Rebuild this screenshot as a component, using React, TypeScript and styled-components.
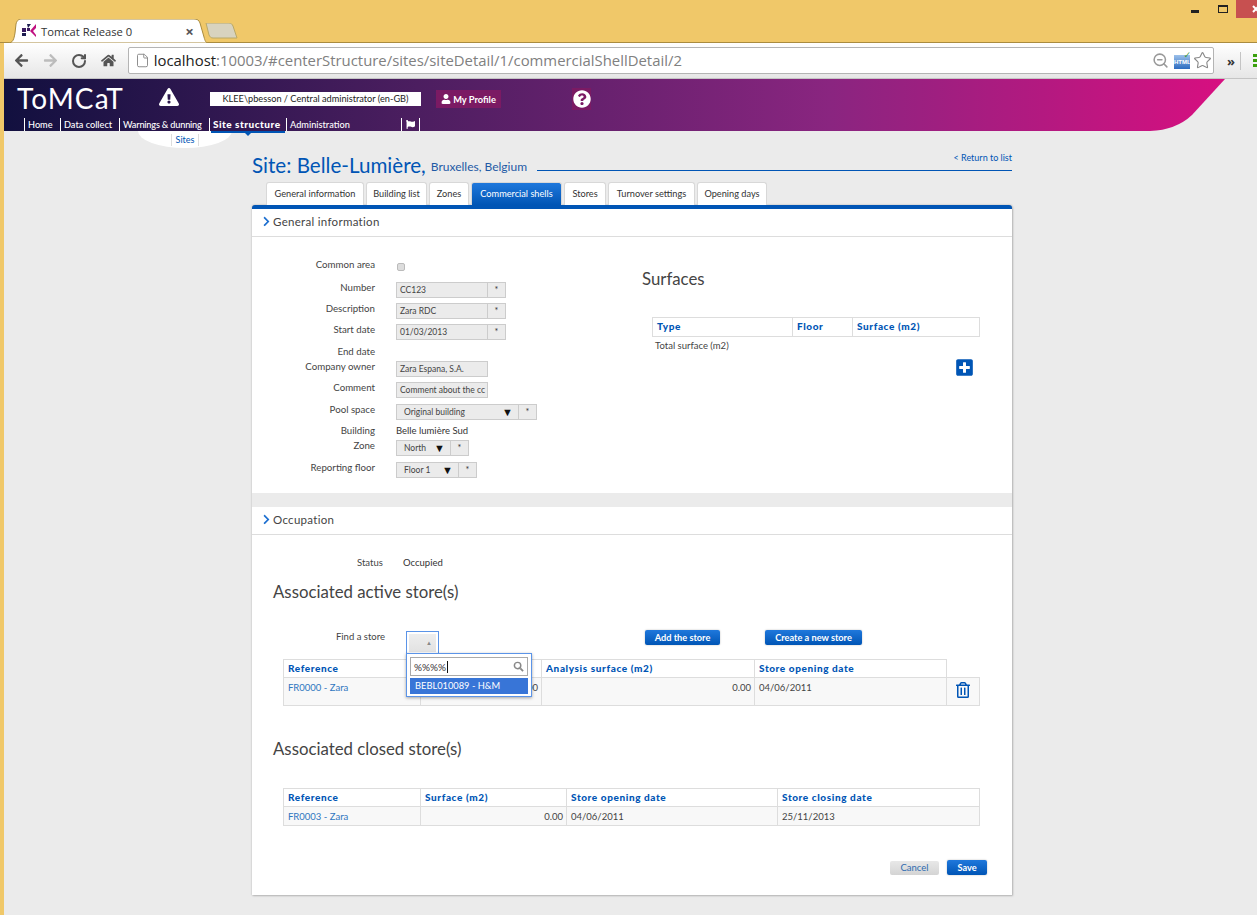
import React from 'react';
import styled, { createGlobalStyle } from 'styled-components';
import { File, RotateCw, Star, ZoomOut } from 'lucide-react';
import {
  FaArrowLeft,
  FaArrowRight,
  FaChevronRight,
  FaExclamationTriangle,
  FaFlag,
  FaHome,
  FaPlusSquare,
  FaQuestionCircle,
  FaRegTrashAlt,
  FaUser,
} from 'react-icons/fa';

const GlobalStyle = createGlobalStyle`
  html, body {
    margin: 0;
    padding: 0;
    height: 915px;
    overflow: hidden;
    background: #f0c869;
  }
  * {
    box-sizing: border-box;
  }
`;

const BLUE = '#0055b5';

const navItems = [
  { label: 'Home', width: 36 },
  { label: 'Data collect', width: 59 },
  { label: 'Warnings & dunning', width: 90, tight: true },
  { label: 'Site structure', width: 77 },
  { label: 'Administration', width: 115 },
];

const pageTabs = [
  { label: 'General information', width: 98 },
  { label: 'Building list', width: 61 },
  { label: 'Zones', width: 40 },
  { label: 'Commercial shells', width: 91 },
  { label: 'Stores', width: 42 },
  { label: 'Turnover settings', width: 87 },
  { label: 'Opening days', width: 70 },
];

const App: React.FC = () => (
  <Page>
    <GlobalStyle />
    <TitleBar>
      <BrowserTab>
        <TabShape width="200" height="24" viewBox="0 0 200 24">
          <path d="M0 24 C5 24 6 20 7 14 L8 5 C9 1 11 0 14 0 L186 0 C189 0 191 1 192 4 L196 18 C197 22 198 24 200 24 Z" fill="#fff" stroke="#a98b3f" />
        </TabShape>
        <TabIcon width="14" height="14" viewBox="0 0 14 14">
          <rect x="0" y="4" width="4" height="4" fill="#3a1a60" />
          <rect x="0" y="9" width="4" height="3" fill="#1c1c50" />
          <rect x="5" y="4" width="3" height="3" fill="#3a1a60" />
          <path d="M5 0 L9 0 L6 4 Z" fill="#1c1c50" />
          <path d="M8 7 L14 0 L14 4 L11 7 L14 11 L14 13 Z" fill="#c01080" />
        </TabIcon>
        <TabTitle>Tomcat Release 0</TabTitle>
        <TabClose>×</TabClose>
      </BrowserTab>
      <NewTab width="34" height="16" viewBox="0 0 34 16">
        <path d="M1 0 L24 0 C26 0 27 1 28 3 L32 15 L8 15 C6 15 5 14 4 12 Z" fill="#d8d3bf" stroke="#b8a868" />
      </NewTab>
      <WindowControls>
        <Minimize />
        <Maximize />
        <CloseBox>
          <svg width="21" height="18" viewBox="0 0 21 18">
            <path d="M17 6 L23 12 M23 6 L17 12" stroke="#fff" strokeWidth="2" />
          </svg>
        </CloseBox>
      </WindowControls>
    </TitleBar>

    <Frame>
      <Toolbar>
        <ToolIcon $color="#555"><FaArrowLeft size={15} /></ToolIcon>
        <ToolIcon $color="#bcbcbc"><FaArrowRight size={15} /></ToolIcon>
        <ToolIcon $color="#555"><RotateCw size={16} strokeWidth={3} /></ToolIcon>
        <ToolIcon $color="#555"><FaHome size={15} /></ToolIcon>
        <AddressBar>
          <File size={15} color="#888" strokeWidth={1.5} />
          <Url>
            <strong>localhost</strong>:10003/#centerStructure/sites/siteDetail/1/commercialShellDetail/2
          </Url>
          <ZoomOut size={17} color="#999" strokeWidth={2.2} />
          <HtmlBadge>HTML</HtmlBadge>
          <Star size={19} color="#888" strokeWidth={1.4} />
        </AddressBar>
        <Chevrons>»</Chevrons>
        <ToolDivider />
        <Hamburger />
      </Toolbar>

      <AppHeader>
        <HeaderTop>
          <Logo>ToMCaT</Logo>
          <WarnIcon><FaExclamationTriangle size={20} /></WarnIcon>
          <UserBox>KLEE\pbesson / Central administrator (en-GB)</UserBox>
          <ProfileButton><FaUser size={10} />My Profile</ProfileButton>
          <HelpButton><FaQuestionCircle size={18} /></HelpButton>
        </HeaderTop>
        <Nav>
          {navItems.map((item) => (
            <NavItem
              key={item.label}
              $width={item.width}
              $tight={item.tight}
              $active={item.label === 'Site structure'}
            >
              {item.label}
            </NavItem>
          ))}
          <FlagItem><FaFlag size={9} /></FlagItem>
        </Nav>
      </AppHeader>
      <SubNavBubble>
        <SubNavItem>Sites</SubNavItem>
      </SubNavBubble>
      <ActiveUnderline />

      <Main>
        <TitleRow>
          <SiteTitle>Site: Belle-Lumière,</SiteTitle>
          <SiteLocation>Bruxelles, Belgium</SiteLocation>
          <TitleRule>
            <ReturnLink>&lt; Return to list</ReturnLink>
          </TitleRule>
        </TitleRow>

        <Tabs>
          {pageTabs.map((tab) => (
            <PageTab key={tab.label} $width={tab.width} $active={tab.label === 'Commercial shells'}>
              {tab.label}
            </PageTab>
          ))}
        </Tabs>

        <Panel>
          <SectionHeader>
            <FaChevronRight size={11} color="#1d6fd0" />
            General information
          </SectionHeader>
          <GeneralBody>
            <FormColumn>
              <FormRow $height={23}>
                <Label>Common area</Label>
                <Check type="checkbox" disabled />
              </FormRow>
              <FormRow $height={21}>
                <Label>Number</Label>
                <FieldGroup><Field $width={92}>CC123</Field><Star2>*</Star2></FieldGroup>
              </FormRow>
              <FormRow $height={21}>
                <Label>Description</Label>
                <FieldGroup><Field $width={92}>Zara RDC</Field><Star2>*</Star2></FieldGroup>
              </FormRow>
              <FormRow $height={22}>
                <Label>Start date</Label>
                <FieldGroup><Field $width={92}>01/03/2013</Field><Star2>*</Star2></FieldGroup>
              </FormRow>
              <FormRow $height={15}>
                <Label>End date</Label>
              </FormRow>
              <FormRow $height={21}>
                <Label>Company owner</Label>
                <Field $width={92}>Zara Espana, S.A.</Field>
              </FormRow>
              <FormRow $height={22}>
                <Label>Comment</Label>
                <Field $width={92}>Comment about the cc</Field>
              </FormRow>
              <FormRow $height={21}>
                <Label>Pool space</Label>
                <FieldGroup>
                  <SelectField $width={123}>Original building<Caret>▼</Caret></SelectField>
                  <Star2>*</Star2>
                </FieldGroup>
              </FormRow>
              <FormRow $height={15}>
                <Label>Building</Label>
                <PlainValue>Belle lumière Sud</PlainValue>
              </FormRow>
              <FormRow $height={22}>
                <Label>Zone</Label>
                <FieldGroup>
                  <SelectField $width={55}>North<Caret>▼</Caret></SelectField>
                  <Star2>*</Star2>
                </FieldGroup>
              </FormRow>
              <FormRow $height={21}>
                <Label>Reporting floor</Label>
                <FieldGroup>
                  <SelectField $width={63}>Floor 1<Caret>▼</Caret></SelectField>
                  <Star2>*</Star2>
                </FieldGroup>
              </FormRow>
            </FormColumn>
            <SurfaceColumn>
              <Heading>Surfaces</Heading>
              <SurfaceTable>
                <colgroup>
                  <col width="140" />
                  <col width="60" />
                  <col width="127" />
                </colgroup>
                <thead>
                  <tr>
                    <Th>Type</Th>
                    <Th>Floor</Th>
                    <Th>Surface (m2)</Th>
                  </tr>
                </thead>
              </SurfaceTable>
              <TotalLine>Total surface (m2)</TotalLine>
              <AddIcon><FaPlusSquare size={19} /></AddIcon>
            </SurfaceColumn>
          </GeneralBody>

          <SectionGap />

          <SectionHeader>
            <FaChevronRight size={11} color="#1d6fd0" />
            Occupation
          </SectionHeader>
          <OccupationBody>
            <StatusRow>
              <StatusLabel>Status</StatusLabel>
              <PlainValue>Occupied</PlainValue>
            </StatusRow>
            <StoreHeading>Associated active store(s)</StoreHeading>
            <FindRow>
              <FindLabel>Find a store</FindLabel>
              <Combo>
                <ComboInner>▲</ComboInner>
              </Combo>
              <Dropdown>
                <SearchBox>
                  <SearchText>%%%%</SearchText>
                  <SearchGlass width="11" height="11" viewBox="0 0 12 12">
                    <circle cx="5" cy="5" r="3.5" fill="none" stroke="#888" strokeWidth="1.6" />
                    <path d="M8 8 L11 11" stroke="#888" strokeWidth="2" />
                  </SearchGlass>
                </SearchBox>
                <Option>BEBL010089 - H&amp;M</Option>
              </Dropdown>
              <AddStoreButton>Add the store</AddStoreButton>
              <CreateStoreButton>Create a new store</CreateStoreButton>
            </FindRow>
            <StoreTable>
              <colgroup>
                <col width="137" />
                <col width="121" />
                <col width="213" />
                <col width="192" />
                <col width="33" />
              </colgroup>
              <thead>
                <tr>
                  <Th>Reference</Th>
                  <Th>Surface (m2)</Th>
                  <Th>Analysis surface (m2)</Th>
                  <Th>Store opening date</Th>
                  <BlankTh />
                </tr>
              </thead>
              <tbody>
                <tr>
                  <Td><StoreLink>FR0000 - Zara</StoreLink></Td>
                  <NumTd>0.00</NumTd>
                  <NumTd>0.00</NumTd>
                  <Td>04/06/2011</Td>
                  <IconTd><FaRegTrashAlt size={16} color={BLUE} /></IconTd>
                </tr>
              </tbody>
            </StoreTable>
            <ClosedHeading>Associated closed store(s)</ClosedHeading>
            <ClosedTable>
              <colgroup>
                <col width="137" />
                <col width="146" />
                <col width="211" />
                <col width="202" />
              </colgroup>
              <thead>
                <tr>
                  <Th>Reference</Th>
                  <Th>Surface (m2)</Th>
                  <Th>Store opening date</Th>
                  <Th>Store closing date</Th>
                </tr>
              </thead>
              <tbody>
                <tr>
                  <ClosedTd><StoreLink>FR0003 - Zara</StoreLink></ClosedTd>
                  <ClosedNum>0.00</ClosedNum>
                  <ClosedTd>04/06/2011</ClosedTd>
                  <ClosedTd>25/11/2013</ClosedTd>
                </tr>
              </tbody>
            </ClosedTable>
            <Footer>
              <CancelButton>Cancel</CancelButton>
              <SaveButton>Save</SaveButton>
            </Footer>
          </OccupationBody>
        </Panel>
      </Main>
    </Frame>
  </Page>
);

const Page = styled.div`
  width: 1257px;
  height: 915px;
  overflow: hidden;
  background: #f0c869;
  font-family: 'Lato', 'Open Sans', sans-serif;
`;

const TitleBar = styled.div`
  position: relative;
  height: 43px;
  display: flex;
  align-items: flex-end;
  padding-left: 8px;
  border-bottom: 1px solid #a98b3f;
`;

const BrowserTab = styled.div`
  position: relative;
  width: 200px;
  height: 24px;
  margin-bottom: -1px;
  display: flex;
  align-items: center;
  padding-left: 14px;
`;

const TabShape = styled.svg`
  position: absolute;
  left: 0;
  top: 0;
`;

const TabIcon = styled.svg`
  position: relative;
  flex: none;
`;

const TabTitle = styled.span`
  position: relative;
  margin-left: 5px;
  font: 11.2px 'Open Sans', sans-serif;
  color: #333;
`;

const TabClose = styled.span`
  position: relative;
  margin-left: 53px;
  font: bold 15px 'Open Sans', sans-serif;
  color: #555;
`;

const NewTab = styled.svg`
  margin: 0 0 3px -3px;
`;

const WindowControls = styled.div`
  position: absolute;
  top: 0;
  right: 0;
  display: flex;
  align-items: flex-start;
`;

const Minimize = styled.span`
  width: 8px;
  height: 3px;
  margin: 10px 19px 0 0;
  background: #222;
`;

const Maximize = styled.span`
  width: 10px;
  height: 8px;
  margin: 5px 8px 0 0;
  border: 1px solid #222;
  border-top-width: 2px;
`;

const CloseBox = styled.span`
  width: 21px;
  height: 18px;
  background: #c75050;
`;

const Frame = styled.div`
  position: relative;
  margin-left: 4px;
  height: 872px;
  background: #ebebeb;
`;

const Toolbar = styled.div`
  height: 36px;
  display: flex;
  align-items: center;
  padding-left: 3px;
  background: linear-gradient(#fff, #e6e6e6);
  border-bottom: 1px solid #c4c4c4;
`;

const ToolIcon = styled.span<{ $color: string }>`
  width: 29px;
  display: flex;
  justify-content: center;
  color: ${(props) => props.$color};
`;

const AddressBar = styled.div`
  width: 1089px;
  height: 27px;
  margin-left: 5px;
  display: flex;
  align-items: center;
  padding: 0 1px 0 6px;
  background: #fff;
  border: 1px solid #b4b4b4;
  border-radius: 2px;
  svg {
    flex: none;
  }
`;

const Url = styled.span`
  flex: 1;
  margin: 0 0 1px 4px;
  font: 14.9px 'Open Sans', sans-serif;
  color: #808080;
  strong {
    font-weight: 400;
    color: #222;
  }
`;

const HtmlBadge = styled.span`
  position: relative;
  width: 16px;
  height: 14px;
  margin: 2px 3px 0 5px;
  background: linear-gradient(#9cc0ea, #2c6cc0);
  color: #fff;
  font: bold 6px/15px 'Liberation Sans', sans-serif;
  text-align: center;
  &::after {
    content: '✓';
    position: absolute;
    top: -5px;
    right: -1px;
    color: #3c9a3c;
    font: bold 9px/10px 'DejaVu Sans', sans-serif;
  }
`;

const Chevrons = styled.span`
  margin-left: 13px;
  font: bold 13px 'Open Sans', sans-serif;
  color: #333;
`;

const ToolDivider = styled.span`
  width: 1px;
  height: 18px;
  margin-left: 5px;
  background: #c4c4c4;
`;

const Hamburger = styled.span`
  width: 4px;
  height: 13px;
  margin-left: 12px;
  background: repeating-linear-gradient(#3aa00c 0 3px, transparent 3px 5px);
`;

const AppHeader = styled.header`
  height: 52px;
  display: flex;
  flex-direction: column;
  background: linear-gradient(90deg, #12103f 0%, #4c1e60 33%, #8a2580 66%, #d60f80 97%);
  clip-path: path('M0 0 H1221 L1188 36 Q1172 51 1146 52 H0 Z');
`;

const HeaderTop = styled.div`
  height: 39px;
  display: flex;
  align-items: flex-start;
  padding-left: 13px;
`;

const Logo = styled.div`
  width: 106px;
  margin-top: 3px;
  font: 400 28px/32px 'Lato', sans-serif;
  letter-spacing: 1.1px;
  color: #fff;
`;

const WarnIcon = styled.span`
  margin: 8px 0 0 36px;
  color: #fff;
`;

const UserBox = styled.div`
  width: 211px;
  height: 14px;
  margin: 13px 0 0 31px;
  background: #fff;
  color: #222;
  font-size: 9.2px;
  line-height: 14px;
  text-align: center;
`;

const ProfileButton = styled.div`
  width: 65px;
  height: 18px;
  margin: 11px 0 0 15px;
  display: flex;
  align-items: center;
  justify-content: center;
  gap: 2px;
  background: #7b1a63;
  color: #fff;
  font-size: 9.3px;
  font-weight: 700;
`;

const HelpButton = styled.div`
  width: 19px;
  height: 22px;
  margin: 9px 0 0 71px;
  display: flex;
  align-items: center;
  justify-content: center;
  background: #7b1a63;
  color: #fff;
`;

const Nav = styled.nav`
  height: 13px;
  display: flex;
  padding-left: 20px;
`;

const NavItem = styled.div<{ $width: number; $active?: boolean; $tight?: boolean }>`
  width: ${(props) => props.$width}px;
  height: 13px;
  padding-left: 3px;
  border-left: 1px solid #fff;
  color: #fff;
  font-size: ${(props) => (props.$active ? '10px' : '9.2px')};
  font-weight: ${(props) => (props.$active ? 900 : 500)};
  letter-spacing: ${(props) => (props.$active ? '0.5px' : props.$tight ? '-0.2px' : '0')};
  line-height: 13px;
  white-space: nowrap;
`;

const FlagItem = styled.div`
  width: 19px;
  height: 13px;
  display: flex;
  align-items: center;
  justify-content: center;
  border-left: 1px solid #fff;
  border-right: 1px solid #fff;
  color: #fff;
`;

const SubNavBubble = styled.div`
  position: absolute;
  left: 134px;
  top: 88px;
  width: 94px;
  height: 17px;
  display: flex;
  justify-content: center;
  background: #fff;
  border-radius: 0 0 47px 47px / 0 0 17px 17px;
`;

const SubNavItem = styled.div`
  height: 12px;
  margin-top: 3px;
  padding: 0 4px;
  border-left: 1px solid #ddd;
  border-right: 1px solid #ddd;
  color: ${BLUE};
  font-size: 9px;
  line-height: 12px;
`;

const ActiveUnderline = styled.div`
  position: absolute;
  left: 207px;
  top: 88px;
  width: 74px;
  height: 2px;
  background: ${BLUE};
  &::after {
    content: '';
    position: absolute;
    left: 34px;
    top: 2px;
    border: 3px solid transparent;
    border-top-color: ${BLUE};
    border-bottom: 0;
  }
`;

const Main = styled.main`
  width: 760px;
  margin: 0 0 0 248px;
`;

const TitleRow = styled.div`
  height: 51px;
  padding-top: 22px;
  display: flex;
  align-items: flex-start;
`;

const SiteTitle = styled.h1`
  margin: 0;
  font-size: 20.6px;
  font-weight: 400;
  line-height: 24px;
  color: ${BLUE};
`;

const SiteLocation = styled.span`
  margin: 6px 0 0 5px;
  font-size: 12px;
  line-height: 16px;
  color: #1f5aa5;
`;

const TitleRule = styled.div`
  flex: 1;
  height: 18px;
  margin-left: 10px;
  border-bottom: 1px solid ${BLUE};
  display: flex;
  justify-content: flex-end;
  align-items: flex-start;
`;

const ReturnLink = styled.a`
  margin-top: -1px;
  font-size: 9px;
  line-height: 12px;
  color: ${BLUE};
`;

const Tabs = styled.div`
  height: 23px;
  display: flex;
  gap: 2px;
  padding-left: 14px;
`;

const PageTab = styled.div<{ $width: number; $active?: boolean }>`
  width: ${(props) => props.$width}px;
  height: 23px;
  padding-bottom: 2px;
  display: flex;
  align-items: center;
  justify-content: center;
  border: 1px solid #d8d8d8;
  border-bottom: 0;
  border-radius: 3px 3px 0 0;
  background: ${(props) => (props.$active ? 'linear-gradient(#1f78dc, #0055b5)' : '#fff')};
  color: ${(props) => (props.$active ? '#fff' : '#333')};
  font-size: 9.2px;
  white-space: nowrap;
`;

const Panel = styled.div`
  height: 690px;
  background: #ebebeb;
  border-top: 4px solid ${BLUE};
  border-radius: 3px 3px 0 0;
  box-shadow: 0 0 2px #aaa, 1px 1px 2px #bbb;
`;

const SectionHeader = styled.div`
  height: 28px;
  display: flex;
  align-items: center;
  gap: 1px;
  padding: 0 0 2px 9px;
  background: #fff;
  border-bottom: 1px solid #ddd;
  font-size: 11.5px;
  color: #444;
  letter-spacing: 0.3px;
`;

const GeneralBody = styled.div`
  height: 256px;
  display: flex;
  padding-top: 22px;
  background: #fff;
`;

const FormColumn = styled.div`
  width: 390px;
`;

const FormRow = styled.div<{ $height: number }>`
  height: ${(props) => props.$height}px;
  display: grid;
  grid-template-columns: 123px 1fr;
  column-gap: 21px;
  align-items: start;
`;

const Label = styled.div`
  margin-top: -1px;
  text-align: right;
  font-size: 9.7px;
  line-height: 12px;
  color: #444;
`;

const Check = styled.input`
  appearance: none;
  width: 8px;
  height: 8px;
  margin: 4px 0 0 1px;
  background: #ddd;
  border: 1px solid #bbb;
  border-radius: 2px;
`;

const FieldGroup = styled.div`
  display: flex;
`;

const Field = styled.div<{ $width: number }>`
  width: ${(props) => props.$width}px;
  height: 16px;
  padding: 0 3px;
  overflow: hidden;
  white-space: nowrap;
  background: #ebebeb;
  border: 1px solid #ccc;
  font-size: 8.5px;
  line-height: 14px;
  color: #444;
`;

const SelectField = styled(Field)`
  display: flex;
  justify-content: space-between;
  padding: 0 5px 0 7px;
`;

const Caret = styled.span`
  color: #111;
  font-size: 11px;
`;

const Star2 = styled.div`
  width: 19px;
  height: 16px;
  margin-left: -1px;
  background: #ebebeb;
  border: 1px solid #ccc;
  text-align: center;
  font-size: 9px;
  line-height: 14px;
  color: #333;
`;

const PlainValue = styled.div`
  font-size: 9.5px;
  line-height: 12px;
  color: #333;
`;

const SurfaceColumn = styled.div`
  position: relative;
  flex: 1;
`;

const Heading = styled.h2`
  margin: 9px 0 27px 0;
  font-size: 16.8px;
  font-weight: 400;
  line-height: 22px;
  color: #444;
`;

const Table = styled.table`
  border-collapse: collapse;
  table-layout: fixed;
  font-size: 9.5px;
`;

const SurfaceTable = styled(Table)`
  width: 327px;
  margin-left: 10px;
`;

const Th = styled.th`
  height: 19px;
  padding: 0 4px 2px;
  border: 1px solid #ddd;
  background: #fff;
  text-align: left;
  font-size: 10px;
  font-weight: 900;
  color: ${BLUE};
  letter-spacing: 0.6px;
`;

const BlankTh = styled.th`
  border: 0;
`;

const TotalLine = styled.div`
  margin: 3px 0 0 13px;
  font-size: 9.5px;
  line-height: 12px;
  color: #444;
`;

const AddIcon = styled.div`
  margin: 6px 0 0 313px;
  color: ${BLUE};
`;

const SectionGap = styled.div`
  height: 14px;
`;

const OccupationBody = styled.div`
  height: 360px;
  padding: 22px 32px 0 21px;
  background: #fff;
`;

const StatusRow = styled.div`
  display: flex;
  height: 12px;
  padding-left: 84px;
`;

const StatusLabel = styled.div`
  width: 46px;
  font-size: 9.5px;
  line-height: 12px;
  color: #444;
`;

const StoreHeading = styled.h2`
  margin: 12px 0 27px 0;
  font-size: 16.8px;
  font-weight: 400;
  line-height: 22px;
  color: #444;
`;

const FindRow = styled.div`
  position: relative;
  height: 29px;
  display: flex;
  align-items: flex-start;
`;

const FindLabel = styled.div`
  width: 112px;
  margin-top: 1px;
  text-align: right;
  font-size: 9.5px;
  line-height: 12px;
  color: #444;
`;

const Combo = styled.div`
  width: 33px;
  height: 23px;
  margin: 1px 0 0 21px;
  padding: 2px;
  background: #fff;
  border: 1px solid #5b94e8;
  border-bottom: 0;
`;

const ComboInner = styled.div`
  height: 18px;
  background: linear-gradient(#eee, #e2e2e2);
  color: #888;
  font-size: 6px;
  line-height: 18px;
  text-align: right;
  padding-right: 4px;
`;

const Dropdown = styled.div`
  position: absolute;
  left: 133px;
  top: 23px;
  z-index: 2;
  width: 126px;
  height: 44px;
  padding: 3px;
  background: #fff;
  border: 1px solid #5b94e8;
  box-shadow: 0 1px 3px rgba(0, 0, 0, 0.35);
`;

const SearchBox = styled.div`
  height: 19px;
  display: flex;
  align-items: center;
  justify-content: space-between;
  padding: 0 3px;
  border: 1px solid #aaa;
`;

const SearchText = styled.span`
  font-size: 10px;
  color: #333;
  padding-right: 1px;
  border-right: 1px solid #111;
`;

const SearchGlass = styled.svg`
  flex: none;
`;

const Option = styled.div`
  height: 16px;
  margin-top: 2px;
  padding-left: 5px;
  background: #3875d7;
  color: #fff;
  font-size: 9.3px;
  line-height: 15px;
`;

const BlueButton = styled.button`
  height: 15px;
  padding: 0;
  border: 0;
  border-radius: 2px;
  background: linear-gradient(#1f78dc, #0055b5);
  box-shadow: 0 0 2px #bbb;
  color: #fff;
  font-family: inherit;
  font-size: 9.2px;
  font-weight: 700;
  line-height: 15px;
`;

const AddStoreButton = styled(BlueButton)`
  width: 75px;
  margin-left: 206px;
`;

const CreateStoreButton = styled(BlueButton)`
  width: 97px;
  margin-left: 45px;
`;

const StoreTable = styled(Table)`
  width: 696px;
  margin-left: 10px;
  th {
    height: 18px;
  }
`;

const Td = styled.td`
  height: 28px;
  padding: 4px 3px 0 4px;
  vertical-align: top;
  border: 1px solid #ddd;
  background: #f8f8f8;
  font-size: 9.5px;
  line-height: 12px;
  color: #444;
`;

const NumTd = styled(Td)`
  text-align: right;
`;

const IconTd = styled(Td)`
  padding: 4px 0 0;
  text-align: center;
`;

const StoreLink = styled.a`
  color: #2f76c0;
`;

const ClosedHeading = styled.h2`
  margin: 32px 0 28px 0;
  font-size: 16.8px;
  font-weight: 400;
  line-height: 22px;
  color: #444;
`;

const ClosedTable = styled(Table)`
  width: 696px;
  margin-left: 10px;
  th {
    height: 18px;
  }
`;

const ClosedTd = styled(Td)`
  height: 19px;
`;

const ClosedNum = styled(ClosedTd)`
  text-align: right;
`;

const Footer = styled.div`
  display: flex;
  justify-content: flex-end;
  align-items: center;
  gap: 8px;
  margin: 34px -7px 0 0;
`;

const CancelButton = styled.button`
  width: 49px;
  height: 14px;
  padding: 0;
  border: 0;
  border-radius: 2px;
  background: linear-gradient(#e8e8e8, #d4d4d4);
  color: #2f6cb0;
  font-family: inherit;
  font-size: 9.5px;
  line-height: 14px;
`;

const SaveButton = styled(BlueButton)`
  width: 40px;
`;

export default App;
